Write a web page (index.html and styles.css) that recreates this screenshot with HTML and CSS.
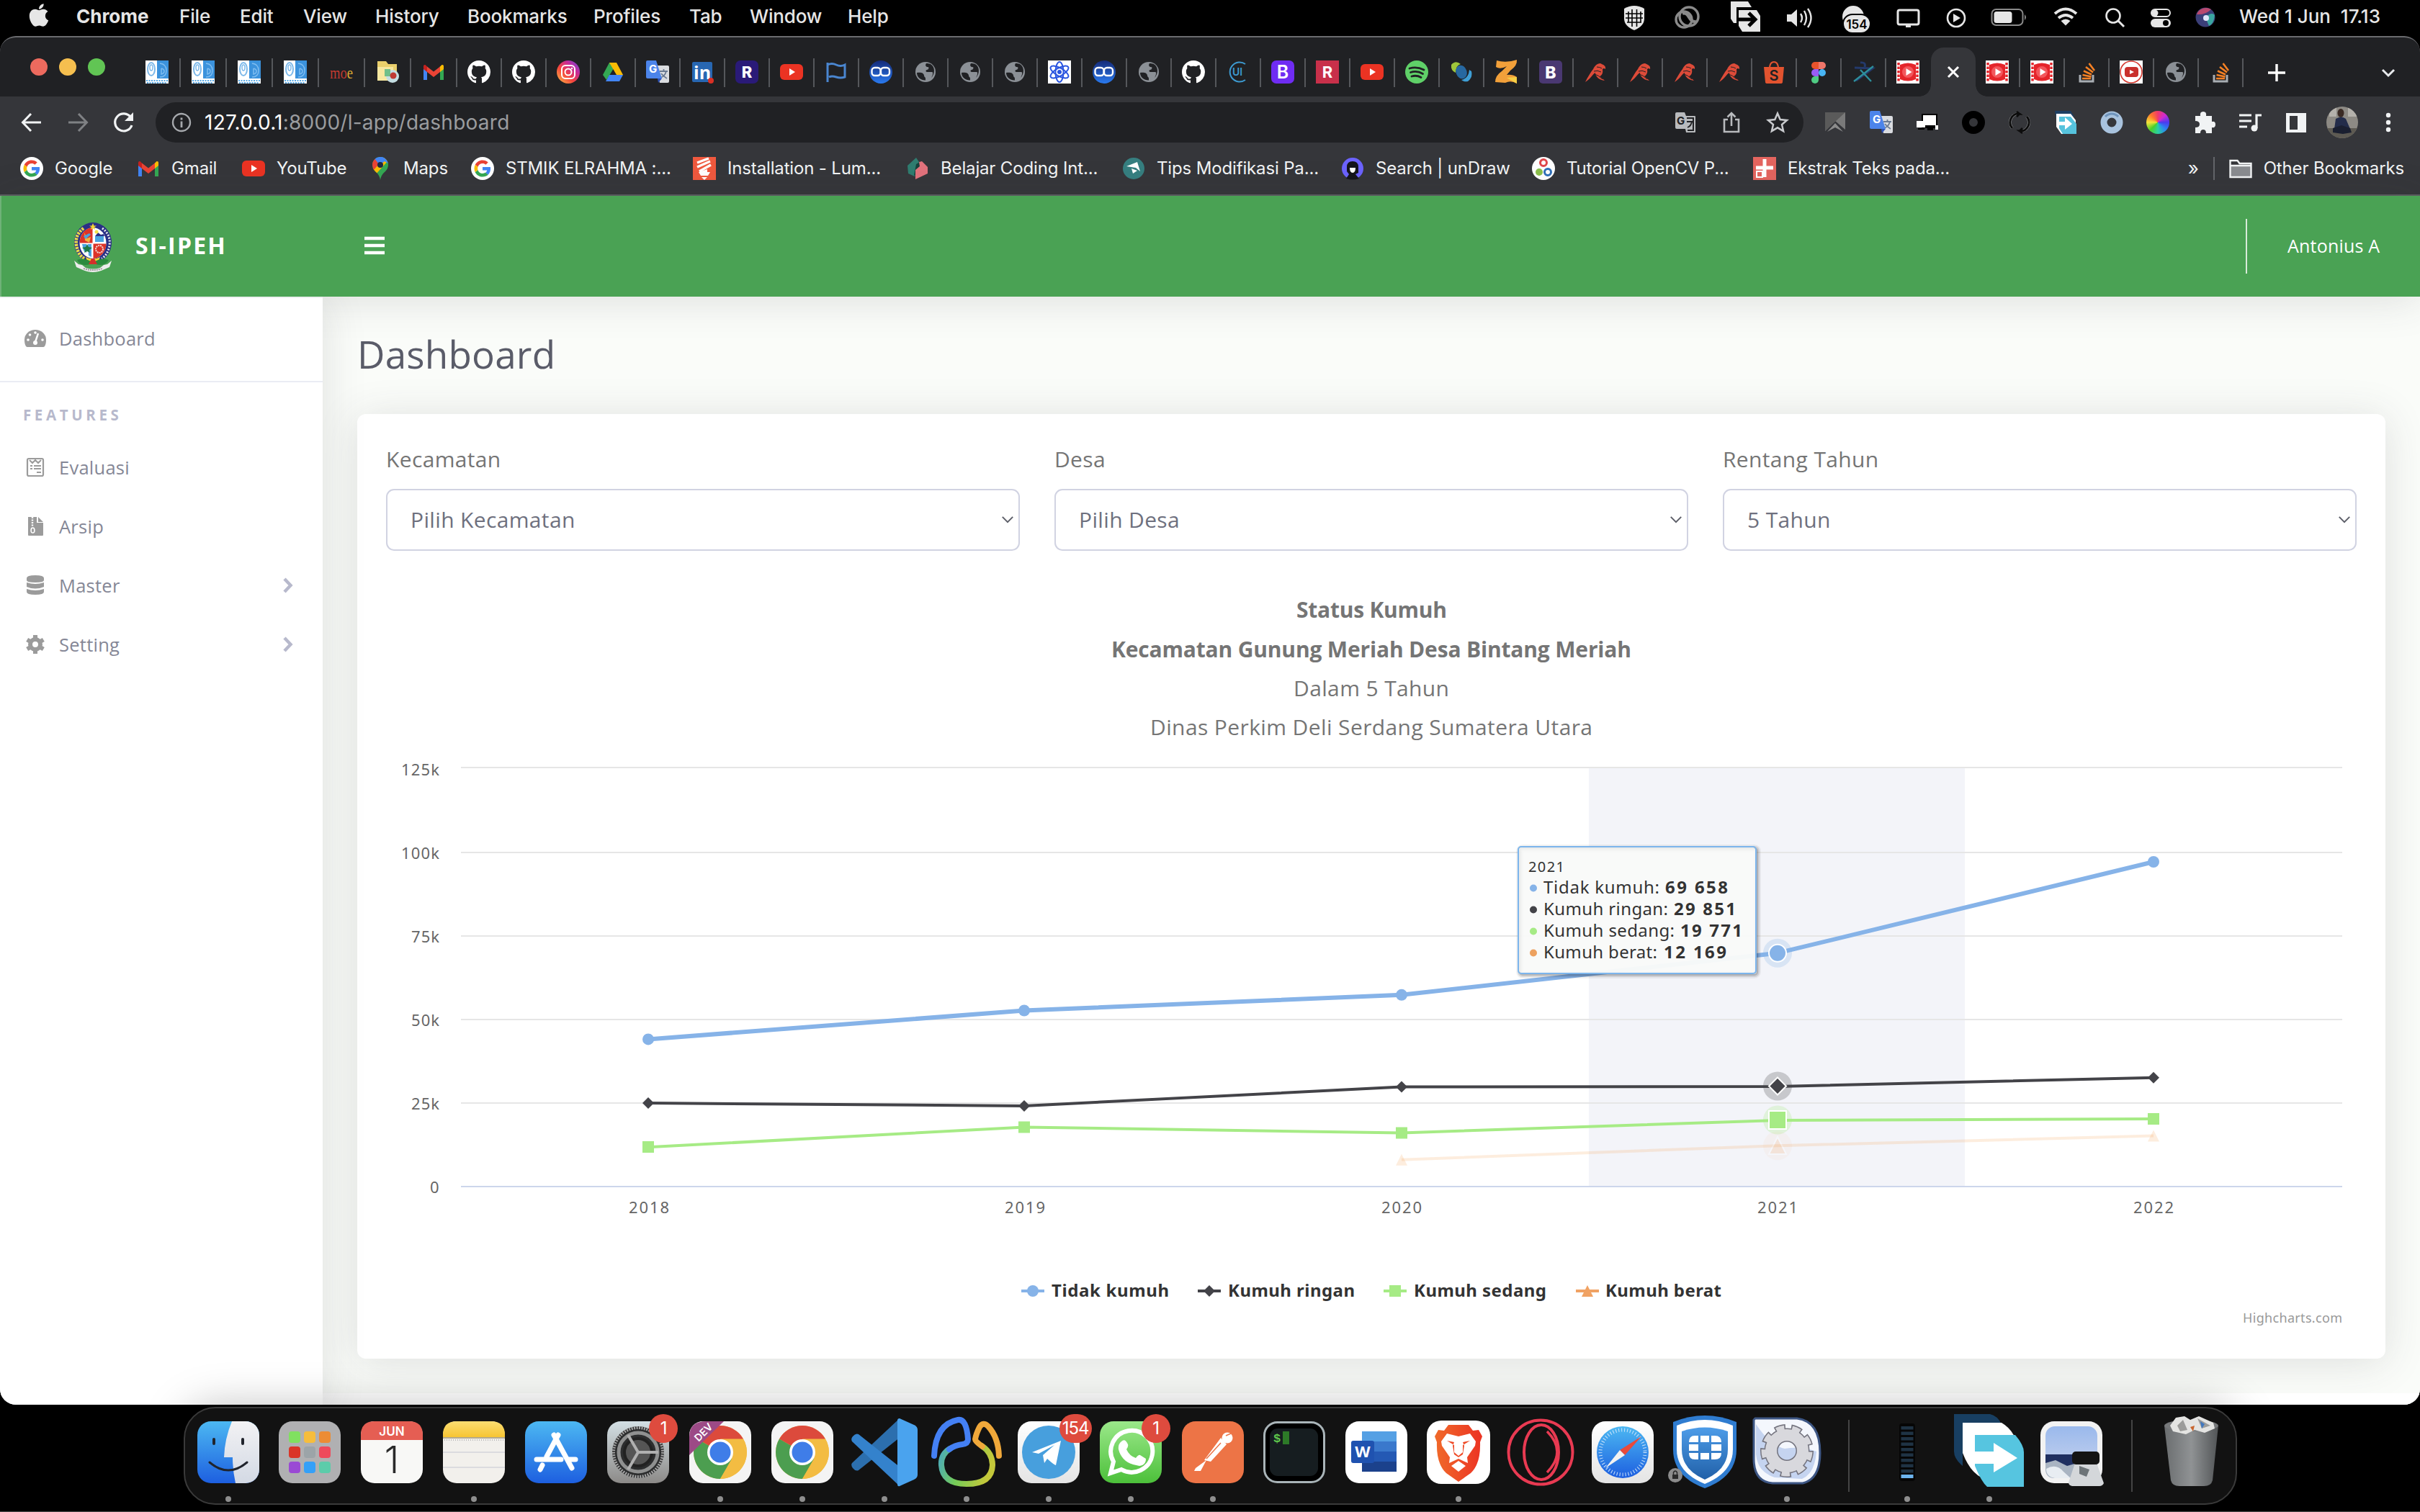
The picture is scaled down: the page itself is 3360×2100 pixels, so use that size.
FILE: index.html
```html
<!DOCTYPE html>
<html lang="id">
<head>
<meta charset="utf-8">
<title>Dashboard</title>
<link rel="stylesheet" href="styles.css">
</head>
<body>
<svg class="defs" width="0" height="0">
  <defs>
    <linearGradient id="gInsta" x1="0" y1="1" x2="1" y2="0"><stop offset="0" stop-color="#fdc648"/><stop offset=".4" stop-color="#f5443c"/><stop offset=".7" stop-color="#c52b9b"/><stop offset="1" stop-color="#5f4de0"/></linearGradient>
    <linearGradient id="gBlue" x1="0" y1="0" x2="0" y2="1"><stop offset="0" stop-color="#4cb8f2"/><stop offset="1" stop-color="#1d5fe0"/></linearGradient>
    <linearGradient id="gBB" x1="0" y1="0" x2="0" y2="1"><stop offset="0" stop-color="#152a78"/><stop offset="1" stop-color="#2a7af0"/></linearGradient>
    <linearGradient id="gWhite" x1="0" y1="0" x2="0" y2="1"><stop offset="0" stop-color="#fff"/><stop offset="1" stop-color="#e4e4e4"/></linearGradient>
    <linearGradient id="gGreen" x1="0" y1="0" x2="0" y2="1"><stop offset="0" stop-color="#9be88a"/><stop offset="1" stop-color="#4cc03a"/></linearGradient>
    <linearGradient id="gYellow" x1="0" y1="0" x2="0" y2="1"><stop offset="0" stop-color="#fbdd72"/><stop offset="1" stop-color="#f7c532"/></linearGradient>
    <linearGradient id="gGrey" x1="0" y1="0" x2="0" y2="1"><stop offset="0" stop-color="#d3dfe4"/><stop offset="1" stop-color="#8c8a88"/></linearGradient>
    <linearGradient id="gCan" x1="0" y1="0" x2="1" y2="0"><stop offset="0" stop-color="#6f7274"/><stop offset=".5" stop-color="#96999b"/><stop offset="1" stop-color="#55585a"/></linearGradient>
    <linearGradient id="gShield" x1="0" y1="0" x2="0" y2="1"><stop offset="0" stop-color="#4d9ce8"/><stop offset="1" stop-color="#2160a8"/></linearGradient>
    <linearGradient id="gBrave" x1="0" y1="0" x2="1" y2="0"><stop offset="0" stop-color="#f06a2a"/><stop offset="1" stop-color="#ec3323"/></linearGradient>
    <linearGradient id="gFace" x1="0" y1="0" x2="0" y2="1"><stop offset="0" stop-color="#f2f2f4"/><stop offset="1" stop-color="#d3d9e4"/></linearGradient>
    <linearGradient id="gNavi" gradientUnits="userSpaceOnUse" x1="22" y1="40" x2="94" y2="60"><stop offset="0" stop-color="#48a8c0"/><stop offset=".45" stop-color="#74cc58"/><stop offset="1" stop-color="#c4c83a"/></linearGradient>
    <linearGradient id="gSky" x1="0" y1="0" x2="0" y2="1"><stop offset="0" stop-color="#9ab9ec"/><stop offset="1" stop-color="#cdd6ee"/></linearGradient>
  </defs>
  <symbol id="github" viewBox="0 0 16 16"><path fill="#fff" d="M8 0C3.58 0 0 3.58 0 8c0 3.54 2.29 6.53 5.47 7.59.4.07.55-.17.55-.38 0-.19-.01-.82-.01-1.49-2.01.37-2.53-.49-2.69-.94-.09-.23-.48-.94-.82-1.13-.28-.15-.68-.52-.01-.53.63-.01 1.08.58 1.23.82.72 1.21 1.87.87 2.33.66.07-.52.28-.87.51-1.07-1.78-.2-3.64-.89-3.64-3.95 0-.87.31-1.59.82-2.15-.08-.2-.36-1.02.08-2.12 0 0 .67-.21 2.2.82.64-.18 1.32-.27 2-.27.68 0 1.36.09 2 .27 1.53-1.04 2.2-.82 2.2-.82.44 1.1.16 1.92.08 2.12.51.56.82 1.27.82 2.15 0 3.07-1.87 3.75-3.65 3.95.29.25.54.73.54 1.48 0 1.07-.01 1.93-.01 2.2 0 .21.15.46.55.38A8.013 8.013 0 0016 8c0-4.42-3.58-8-8-8z"/></symbol>
  <symbol id="google" viewBox="0 0 32 32"><circle cx="16" cy="16" r="16" fill="#fff"/><g transform="translate(4.5 4.5) scale(.48)"><path fill="#ea4335" d="M24 9.5c3.54 0 6.71 1.22 9.21 3.6l6.85-6.85C35.9 2.38 30.47 0 24 0 14.62 0 6.51 5.38 2.56 13.22l7.98 6.19C12.43 13.72 17.74 9.5 24 9.5z"/><path fill="#4285f4" d="M46.98 24.55c0-1.57-.15-3.09-.38-4.55H24v9.02h12.94c-.58 2.96-2.26 5.48-4.78 7.18l7.73 6c4.51-4.18 7.09-10.36 7.09-17.65z"/><path fill="#fbbc05" d="M10.53 28.59c-.48-1.45-.76-2.99-.76-4.59s.27-3.14.76-4.59l-7.98-6.19C.92 16.46 0 20.12 0 24c0 3.88.92 7.54 2.56 10.78l7.97-6.19z"/><path fill="#34a853" d="M24 48c6.48 0 11.93-2.13 15.89-5.81l-7.73-6c-2.15 1.45-4.92 2.3-8.16 2.3-6.26 0-11.57-4.22-13.47-9.91l-7.98 6.19C6.51 42.62 14.62 48 24 48z"/></g></symbol>
  <symbol id="gmail" viewBox="0 0 32 32"><path fill="#4285f4" d="M2 27h5V14L2 9z"/><path fill="#34a853" d="M25 27h5V9l-5 5z"/><path fill="#c5221f" d="M2 8v4l5 4V8.500L5 6.500C3.500 5.500 2 6.500 2 8z"/><path fill="#fbbc04" d="M30 8v4l-5 4V8.500L27 6.500c1.500-1 3 0 3 1.500z"/><path fill="#ea4335" d="M7 8.500l9 7 9-7V16l-9 7-9-7z"/></symbol>
  <symbol id="youtube" viewBox="0 0 32 32"><rect y="5" width="32" height="22" rx="6" fill="#eb3323"/><path fill="#fff" d="M13 11l8 5-8 5z"/></symbol>
  <symbol id="globe" viewBox="0 0 32 32"><circle cx="16" cy="16" r="14" fill="#8b9096"/><path fill="#202124" d="M4 17c5-1 10 0 10 4 0 2 2 2 2 4v2.500C9 27.500 4 23 4 17zM17 4c-2 3 0 5 2 5 3 0 1 4-1 4s-2 3 0 3h7c2 0 1 5-1 8 5-5 6-15-1-19-2-1-4-1-6-1z"/></symbol>
  <symbol id="share1" viewBox="0 0 32 32"><rect width="32" height="32" fill="#fff"/><path fill="#3b92dc" d="M16 0h16v25H16z"/><ellipse cx="8" cy="12" rx="5" ry="9" fill="none" stroke="#7db9ea" stroke-width="2"/><ellipse cx="8" cy="10" rx="2" ry="4" fill="none" stroke="#7db9ea" stroke-width="1.500"/><path d="M20 4q9 1 9 10t-9 9M22 11v8q4-1 4-4t-4-4" fill="none" stroke="#7fbdf0" stroke-width="1.500"/><path d="M1 28h30M2 31h28" stroke="#58a8e4" stroke-width="2" stroke-dasharray="2 1.500"/></symbol>
  <symbol id="bb" viewBox="0 0 32 32"><circle cx="16" cy="16" r="16" fill="url(#gBB)"/><rect x="3.500" y="10" width="12" height="11" rx="4" fill="none" stroke="#fff" stroke-width="2.400"/><rect x="16" y="10" width="12" height="11" rx="4" fill="none" stroke="#fff" stroke-width="2.400"/></symbol>
  <symbol id="ci" viewBox="0 0 32 32"><path fill="#dd4b39" d="M23 4c4 2 8 3 7 8-2-2-4-1-4 1 1 4-1 8-4 9 2 2 5 4 7 6-7-1-13-5-13-11-3 1-6 8-14 13 3-6 7-13 11-18 2-4 5-8 10-8z"/><path d="M14 15q5-2 10 1M15 19q5 1 11 7M18 9q4 0 7 2" fill="none" stroke="#202124" stroke-width="1"/></symbol>
  <symbol id="vid" viewBox="0 0 32 32"><rect width="32" height="32" fill="#fff"/><path fill="#e5252b" d="M5 6q11-5 22 0v20q-11 5-22 0z"/><path d="M3 3v26M29 3v26" stroke="#e5252b" stroke-width="3.500" stroke-dasharray="3.500 2"/><circle cx="16" cy="16" r="8" fill="#f3575c"/><path fill="#fff" d="M13.500 11l8 5-8 5z"/></symbol>
  <symbol id="so" viewBox="0 0 32 32"><path d="M7 20v9h18v-9" fill="none" stroke="#a8adb2" stroke-width="3"/><path d="M10 25h12M10.500 20l12 2.400M12 14.500l11 5M15 9l10 7.500M19.500 4l7.500 10" stroke="#f48024" stroke-width="2.600"/></symbol>
  <symbol id="translate" viewBox="0 0 32 32"><path fill="#dadce0" d="M13 7h17q2 0 2 2v20q0 2-2 2H19z"/><path d="M19 15h11M24.500 12v3M28 15q-2 7-8 9M21 18q3 4 8 7" stroke="#6a7a92" stroke-width="1.800" fill="none"/><path fill="#4c84ea" d="M2 0h12l8 25H2q-2 0-2-2V2q0-2 2-2z"/><path fill="#2b50b8" d="M16 25h6l-5 6z"/><text x="4" y="17" font-size="15" font-weight="700" fill="#fff" font-family="Inter">G</text></symbol>
  <symbol id="chromeball" viewBox="0 0 74 74"><circle cx="37" cy="37" r="37" fill="#f3bc42"/><path fill="#dc4a3c" d="M37 37L5 18.500A37 37 0 0169 18.500z"/><path fill="#4c9e50" d="M37 37L5 18.500A37 37 0 0037 74L53 46z"/><path fill="#f3bc42" d="M37 18.500h32A37 37 0 0137 74l17-28z"/><circle cx="37" cy="37" r="18" fill="#fff"/><circle cx="37" cy="37" r="14.500" fill="#3f7de8"/></symbol>
</svg>

<header class="menubar">
  <nav class="menus">
    <svg class="apple" viewBox="0 0 384 512"><path fill="#e6e6e6" d="M318.7 268.7c-.2-36.7 16.400-64.400 50-84.800-18.800-26.900-47.200-41.700-84.700-44.600-35.500-2.800-74.300 20.700-88.500 20.700-15 0-49.400-19.700-76.400-19.700C63.300 141.200 4 184.800 4 273.500q0 39.300 14.400 81.200c12.800 36.700 59 126.700 107.200 125.200 25.200-.6 43-17.900 75.800-17.900 31.800 0 48.300 17.900 76.400 17.900 48.600-.7 90.400-82.500 102.600-119.300-65.200-30.700-61.700-90-61.700-91.900zm-56.600-164.200c27.300-32.400 24.800-61.900 24-72.500-24.100 1.400-52 16.400-67.900 34.900-17.500 19.800-27.800 44.300-25.600 71.900 26.100 2 49.900-11.400 69.500-34.300z"/></svg>
    <b>Chrome</b><span>File</span><span>Edit</span><span>View</span><span>History</span><span>Bookmarks</span><span>Profiles</span><span>Tab</span><span>Window</span><span>Help</span>
  </nav>
  <div class="status">
    <svg viewBox="0 0 50 50"><path fill="#e6e6e6" d="M11 12q14-8 28 0v14q0 10-14 16Q11 36 11 26z"/><path d="M17 16v15M22 13v24M28.500 13v24M34 16v15M13 19h24M13 25h24M15 31h20" stroke="#000" stroke-width="1.600"/></svg>
    <svg viewBox="0 0 50 50"><circle cx="26" cy="23" r="13" fill="none" stroke="#8a8a8a" stroke-width="3.400"/><circle cx="19" cy="27" r="11" fill="none" stroke="#8a8a8a" stroke-width="3.400"/><path d="M17 19q5-2 9 5t10 6" fill="none" stroke="#8a8a8a" stroke-width="4"/></svg>
    <svg viewBox="0 0 50 50"><path fill="#e6e6e6" d="M4 2h24l5 8H12v22h-4l-4-6z"/><path fill="#e6e6e6" d="M15 14h25l5 8v22H20l-5-8z"/><path stroke="#000" stroke-width="5" fill="none" d="M15 27h21M29 18l9 9-9 9"/></svg>
    <svg viewBox="0 0 50 50"><path fill="#e6e6e6" d="M8 20h6l8-7v24l-8-7H8z"/><path d="M27 19q4 6 0 12M32 15q6 10 0 20M37 12q9 13 0 26" fill="none" stroke="#e6e6e6" stroke-width="2.400"/></svg>
    <svg viewBox="0 0 50 50"><circle cx="20" cy="23" r="15" fill="#e6e6e6"/><rect x="6" y="20" width="38" height="26" rx="13" fill="#e6e6e6" stroke="#000" stroke-width="2"/><text x="25" y="39.500" font-size="17" font-weight="600" text-anchor="middle" font-family="Inter">154</text></svg>
    <svg viewBox="0 0 50 50"><rect x="11" y="14" width="29" height="20" rx="2.500" fill="none" stroke="#e6e6e6" stroke-width="3"/><path d="M22 34h7v4h-7z" fill="#e6e6e6"/></svg>
    <svg viewBox="0 0 50 50"><circle cx="25" cy="25" r="12" fill="none" stroke="#e6e6e6" stroke-width="2.600"/><path fill="#e6e6e6" d="M21 19l10 6-10 6z"/></svg>
    <svg viewBox="0 0 50 50"><rect x="1.500" y="13" width="43" height="22" rx="6" fill="none" stroke="#8a8a8a" stroke-width="2"/><rect x="4.500" y="16" width="25" height="16" rx="3.500" fill="#e6e6e6"/><path d="M47 20q4 4 0 8z" fill="#8a8a8a"/></svg>
    <svg viewBox="0 0 50 50"><path d="M10 19q15-13 30 0M15 25q10-8 20 0" fill="none" stroke="#e6e6e6" stroke-width="4"/><path fill="#e6e6e6" d="M18.500 29q6.500-5 13 0L25 35.500z"/></svg>
    <svg viewBox="0 0 50 50"><circle cx="23" cy="22" r="9.500" fill="none" stroke="#e6e6e6" stroke-width="2.600"/><path d="M30 29l8 8" stroke="#e6e6e6" stroke-width="3"/></svg>
    <svg viewBox="0 0 50 50"><rect x="12" y="13" width="26" height="10" rx="5" fill="none" stroke="#e6e6e6" stroke-width="2"/><circle cx="17" cy="18" r="4.500" fill="#e6e6e6"/><rect x="11" y="26" width="28" height="12" rx="6" fill="#e6e6e6"/><circle cx="32" cy="32" r="4" fill="#000"/></svg>
    <svg viewBox="0 0 50 50"><circle cx="25" cy="24" r="13.500" fill="#3b3f78"/><path fill="#b8486e" d="M13 20a13.500 13.500 0 0120-7q-8 8-20 7z"/><path fill="#3aa6a0" d="M25 24q9-8 13-3-1 12-8 15z"/><circle cx="26" cy="25" r="4" fill="#dfe6fa"/></svg>
    <time>Wed 1 Jun&nbsp; 17.13</time>
  </div>
</header>

<main class="window">
  <div class="tabstrip">
    <div class="lights"><i></i><i></i><i></i></div>
    <div class="tabs">
      <div class="tab wide"><svg><use href="#share1"/></svg></div>
      <div class="tab wide"><svg><use href="#share1"/></svg></div>
      <div class="tab wide"><svg><use href="#share1"/></svg></div>
      <div class="tab wide"><svg><use href="#share1"/></svg></div>
      <div class="tab wide"><svg viewBox="0 0 32 32"><text x="0" y="25" font-size="24" font-family="Liberation Serif" fill="#c23a30" textLength="32" lengthAdjust="spacingAndGlyphs">mo<tspan fill="#d8a832">e</tspan></text></svg></div>
      <div class="tab wide"><svg viewBox="0 0 32 32"><path fill="#e9cf6c" d="M2 1h12l3 4h12v23H2z"/><path fill="#f6e7a0" d="M2 9h22v19H2z"/><circle cx="23" cy="22" r="9" fill="#c4dde2"/><path fill="#6fbf8a" d="M12 12h8v10h-8z"/><circle cx="24" cy="21" r="4.500" fill="#c03a34"/></svg></div>
      <div class="tab wide"><svg><use href="#gmail"/></svg></div>
      <div class="tab"><svg><use href="#github"/></svg></div>
      <div class="tab"><svg><use href="#github"/></svg></div>
      <div class="tab"><svg viewBox="0 0 32 32"><circle cx="16" cy="16" r="16" fill="url(#gInsta)"/><rect x="7" y="7" width="18" height="18" rx="5" fill="none" stroke="#fff" stroke-width="2"/><circle cx="16" cy="16" r="4.500" fill="none" stroke="#fff" stroke-width="2"/><circle cx="21" cy="11" r="1.200" fill="#fff"/></svg></div>
      <div class="tab"><svg viewBox="0 0 32 32"><path fill="#34a853" d="M11 3h5l3 5L7 27l-5-7z"/><path fill="#fbbc04" d="M11 3h10l9 17h-9z"/><path fill="#4285f4" d="M11 20h19l-5 9H6z"/></svg></div>
      <div class="tab"><svg><use href="#translate"/></svg></div>
      <div class="tab"><svg viewBox="0 0 32 32"><rect x="2" y="2" width="28" height="28" rx="2" fill="#2867b2"/><text x="4" y="26" font-size="25" font-weight="700" fill="#fff" font-family="Open Sans">in</text><circle cx="28" cy="28" r="4" fill="#d93025"/></svg></div>
      <div class="tab"><svg viewBox="0 0 32 32"><rect width="32" height="32" rx="7" fill="#2a1a78"/><text x="16" y="24" font-size="22" font-weight="800" text-anchor="middle" fill="#fff" font-family="Inter">R</text></svg></div>
      <div class="tab"><svg><use href="#youtube"/></svg></div>
      <div class="tab"><svg viewBox="0 0 32 32"><path fill="none" stroke="#4a86d0" stroke-width="3" d="M4 3v27M4 6q6-3 12 0t12 0v17q-6 2-12 0t-10 0"/></svg></div>
      <div class="tab"><svg><use href="#bb"/></svg></div>
      <div class="tab"><svg><use href="#globe"/></svg></div>
      <div class="tab"><svg><use href="#globe"/></svg></div>
      <div class="tab"><svg><use href="#globe"/></svg></div>
      <div class="tab"><svg viewBox="0 0 32 32"><rect width="32" height="32" fill="#fff"/><g fill="none" stroke="#2a55e0" stroke-width="2"><ellipse cx="16" cy="16" rx="14" ry="5.500" transform="rotate(30 16 16)"/><ellipse cx="16" cy="16" rx="14" ry="5.500" transform="rotate(90 16 16)"/><ellipse cx="16" cy="16" rx="14" ry="5.500" transform="rotate(150 16 16)"/></g><circle cx="16" cy="16" r="3" fill="#2a55e0"/></svg></div>
      <div class="tab"><svg><use href="#bb"/></svg></div>
      <div class="tab"><svg><use href="#globe"/></svg></div>
      <div class="tab"><svg><use href="#github"/></svg></div>
      <div class="tab"><svg viewBox="0 0 32 32"><path d="M26 5a13.500 13.500 0 100 22" fill="none" stroke="#3d9ad0" stroke-width="2"/><text x="8" y="21" font-size="14" font-weight="600" fill="#3d9ad0" font-family="Inter">UI</text></svg></div>
      <div class="tab"><svg viewBox="0 0 32 32"><rect width="32" height="32" rx="7" fill="#6f2cf3"/><text x="16" y="25" font-size="25" font-weight="600" text-anchor="middle" fill="#fff" font-family="Inter">B</text></svg></div>
      <div class="tab"><svg viewBox="0 0 32 32"><rect width="32" height="32" fill="#c8304a"/><text x="16" y="24" font-size="22" font-weight="700" text-anchor="middle" fill="#fff" font-family="Inter">R</text></svg></div>
      <div class="tab"><svg><use href="#youtube"/></svg></div>
      <div class="tab"><svg viewBox="0 0 32 32"><circle cx="16" cy="16" r="16" fill="#5fd068"/><path d="M6 11q10-3 20 2M7.500 16.500q9-3 17 2M9 22q7-2 13 1.500" fill="none" stroke="#202124" stroke-width="2.800" stroke-linecap="round"/></svg></div>
      <div class="tab"><svg viewBox="0 0 32 32"><path fill="#9fc63b" d="M2 6q6-7 13-1-6 1-7 12-7-3-6-11z"/><ellipse cx="16" cy="16" rx="7.500" ry="9.500" transform="rotate(-20 16 16)" fill="#2768a0"/><path fill="#3f9fd6" d="M30 15q2 9-5 14-5 1-9-2 10-2 11-14z"/></svg></div>
      <div class="tab"><svg viewBox="0 0 32 32"><path fill="#f2a03a" d="M3 0q13 4 28-1 1 8-9 15l-5 6q8-1 14 3v9q-8-5-16-1L1 30q0-9 9-15l7-7Q8 13 2 9z"/><path fill="#f6cf45" d="M17 24l14-1v9z"/></svg></div>
      <div class="tab"><svg viewBox="0 0 32 32"><rect width="32" height="32" rx="5" fill="#4a3872"/><text x="16" y="24.500" font-size="23" font-weight="800" text-anchor="middle" fill="#fff" font-family="Inter">B</text></svg></div>
      <div class="tab"><svg><use href="#ci"/></svg></div>
      <div class="tab"><svg><use href="#ci"/></svg></div>
      <div class="tab"><svg><use href="#ci"/></svg></div>
      <div class="tab"><svg><use href="#ci"/></svg></div>
      <div class="tab"><svg viewBox="0 0 32 32"><path fill="#e2532f" d="M2 9h28l-2 21q0 2-3 2H7q-3 0-3-2z"/><path d="M10 9q1-7 6-7t6 7" fill="none" stroke="#e2532f" stroke-width="2.200"/><text x="16" y="28" font-size="20" font-weight="600" text-anchor="middle" fill="#202124" font-family="Inter">S</text></svg></div>
      <div class="tab"><svg viewBox="0 0 32 32"><path fill="#e8532c" d="M16 2h-5a5 5 0 000 10h5z"/><path fill="#f0766a" d="M16 2h5a5 5 0 010 10h-5z"/><path fill="#9a5cf5" d="M16 12h-5a5 5 0 000 10h5z"/><circle cx="21" cy="17" r="5" fill="#48b5f5"/><path fill="#4fcb83" d="M16 22h-5a5 5 0 105 5z"/></svg></div>
      <div class="tab"><svg viewBox="0 0 32 32"><path d="M4 10l25 1L6 28" fill="none" stroke="#243a6c" stroke-width="3"/><path d="M3 29L30 8M12 13l15 16" fill="none" stroke="#2d8f9c" stroke-width="2.400"/><path d="M12 3q8-1 6 6" fill="none" stroke="#243a6c" stroke-width="3"/></svg></div>
      <div class="tab plain"><svg><use href="#vid"/></svg></div>
      <div class="tab active"><svg viewBox="0 0 32 32"><path d="M9 9l14 14M23 9L9 23" stroke="#fff" stroke-width="3"/></svg></div>
      <div class="tab"><svg><use href="#vid"/></svg></div>
      <div class="tab"><svg><use href="#vid"/></svg></div>
      <div class="tab"><svg><use href="#so"/></svg></div>
      <div class="tab"><svg viewBox="0 0 32 32"><rect width="32" height="32" fill="#fff"/><circle cx="16" cy="16" r="15" fill="none" stroke="#d43a30" stroke-width="1.600"/><rect x="7" y="9" width="19" height="14" rx="4" fill="#c9302c"/><path fill="#fff" d="M14 13l6 3-6 3z"/></svg></div>
      <div class="tab"><svg><use href="#globe"/></svg></div>
      <div class="tab"><svg><use href="#so"/></svg></div>
    </div>
    <svg class="plus" viewBox="0 0 32 32"><path d="M16 4v24M4 16h24" stroke="#fff" stroke-width="3.400"/></svg>
    <svg class="tabmenu" viewBox="0 0 32 32"><path d="M8 12l8 8 8-8" fill="none" stroke="#e8eaed" stroke-width="3"/></svg>
  </div>

  <div class="toolbar">
    <div class="navs">
      <svg viewBox="0 0 32 32"><path d="M29 16H4M15 4L3.500 16 15 28" fill="none" stroke="#f1f3f4" stroke-width="3"/></svg>
      <svg viewBox="0 0 32 32"><path d="M3 16h25M17 4l11.500 12L17 28" fill="none" stroke="#7f8184" stroke-width="3"/></svg>
      <svg viewBox="0 0 32 32"><path d="M27 20a12 12 0 11-1.500-11" fill="none" stroke="#f1f3f4" stroke-width="3.200"/><path fill="#f1f3f4" d="M29 2v12H17z"/></svg>
    </div>
    <div class="urlbar">
      <svg viewBox="0 0 28 28"><circle cx="14" cy="14" r="12" fill="none" stroke="#a6a9ad" stroke-width="2.400"/><path d="M14 12.500V21M14 7.500v3" stroke="#a6a9ad" stroke-width="2.800"/></svg>
      <p><b>127.0.0.1</b>:8000/l-app/dashboard</p>
      <div class="urlicons">
        <svg viewBox="0 0 32 32"><path fill="#b8babd" d="M4 2h11l2 5h12q1 0 1 1v21q0 1-1 1H17l-1-5H4q-2 0-2-2V4q0-2 2-2z"/><path d="M18 10h9v17h-8" fill="none" stroke="#202124" stroke-width="2"/><path d="M18 15h9M25 15q-1 6-6 8" stroke="#202124" stroke-width="1.800" fill="none"/><text x="4" y="19" font-size="15" font-weight="700" font-family="Inter" fill="#202124">G</text></svg>
        <svg viewBox="0 0 32 32"><path d="M11 12H6v17h20V12h-5M16 21V3M10.500 8.500L16 3l5.500 5.500" fill="none" stroke="#b8babd" stroke-width="2.600"/></svg>
        <svg viewBox="0 0 32 32"><path d="M16 3.500l3.700 8.500 9.300.900-7 6.100 2.100 9.100L16 23.300l-8.100 4.800L10 19l-7-6.100 9.300-.9z" fill="none" stroke="#c8cacd" stroke-width="2.500"/></svg>
      </div>
    </div>
    <div class="exts">
      <svg viewBox="0 0 32 32"><path fill="#7a7a7a" d="M2 2h28v24L16 14 2 28z"/><path fill="#5a5a5a" d="M2 2h28L2 28z"/><path fill="#8c8c8c" d="M5 29l11-12 11 12-11-6z"/></svg>
      <svg><use href="#translate"/></svg>
      <svg viewBox="0 0 32 32"><path fill="#000" d="M8 4h22v20H8z"/><rect x="10" y="6" width="18" height="14" fill="#fff"/><rect x="1" y="14" width="12" height="9" fill="#fff"/><path fill="#000" d="M3 24h9v2H3zM16 23h8v4h-8z"/><path fill="#fff" d="M27 20h4v6h-4z"/></svg>
      <svg viewBox="0 0 32 32"><circle cx="16" cy="16" r="11" fill="none" stroke="#000" stroke-width="10"/></svg>
      <svg viewBox="0 0 32 32"><path d="M6 24A12 12 0 0116 4M26 8A12 12 0 0116 28" fill="none" stroke="#8a8c8f" stroke-width="4"/><path d="M6 24A12 12 0 0116 4l-4-3M16 4l-4 4M26 8A12 12 0 0116 28l4 3M16 28l4-4" fill="none" stroke="#0c0c0c" stroke-width="2.800"/></svg>
      <svg viewBox="0 0 32 32"><path fill="#1d3f63" d="M1 0h22l5 8H6v18z"/><path fill="#fff" d="M3 4h20l7 9v19H10L3 22z"/><path fill="#56c3dd" d="M7 8h16l8 10v14H12L7 24z"/><path fill="#fff" d="M5 15h10v-6l10 9-10 8v-6H5z"/></svg>
      <svg viewBox="0 0 32 32"><circle cx="16" cy="16" r="11" fill="none" stroke="#a9c3de" stroke-width="9"/><path d="M7 8a12 12 0 0118 0" fill="none" stroke="#6f94bc" stroke-width="3"/></svg>
      <div class="wheel"></div>
      <svg viewBox="0 0 32 32"><path fill="#f1f3f4" d="M4 7h7q-1-6 4-6t4 6h8v8q5-1 5 4t-5 4v8h-8q0-5-4-5t-4 5H4v-8q6 0 6-4.500T4 14z"/></svg>
      <svg viewBox="0 0 32 32"><path d="M1 6h17M1 14h17M1 22h11" stroke="#f1f3f4" stroke-width="3.200"/><circle cx="22" cy="24" r="4.500" fill="#f1f3f4"/><path d="M25 24V6h7" fill="none" stroke="#f1f3f4" stroke-width="3.200"/></svg>
      <svg viewBox="0 0 32 32"><path fill="#f1f3f4" fill-rule="evenodd" d="M2 3h28v27H2zM7 7v19h11V7z"/></svg>
      <svg class="avatar" viewBox="0 0 44 44"><clipPath id="av"><circle cx="22" cy="22" r="22"/></clipPath><g clip-path="url(#av)"><path fill="#8d8a84" d="M0 0h44v44H0z"/><path fill="#5d5a52" d="M0 30h44v14H0z"/><path fill="#b4b1ab" d="M4 0h10v14H4zM30 2h12v12H30z"/><ellipse cx="20" cy="9" rx="4.500" ry="6" fill="#3a2a24"/><path fill="#232c4a" d="M13 17q8-5 14 0l6 14-6 2-4-6-6 6-6-2z"/><path fill="#1a1f30" d="M9 30l12-4 12 4 2 6-12 2-14-2z"/></g></svg>
      <svg viewBox="0 0 32 32"><circle cx="16" cy="6" r="3.200" fill="#f1f3f4"/><circle cx="16" cy="16" r="3.200" fill="#f1f3f4"/><circle cx="16" cy="26" r="3.200" fill="#f1f3f4"/></svg>
    </div>
  </div>

  <div class="bookmarks">
    <div class="marks">
      <a><svg><use href="#google"/></svg><span>Google</span></a>
      <a><svg><use href="#gmail"/></svg><span>Gmail</span></a>
      <a><svg><use href="#youtube"/></svg><span>YouTube</span></a>
      <a><svg viewBox="0 0 32 32"><clipPath id="pin"><path d="M16 32q-1-7-7-12-4-4-4-9a11 11 0 0122 0q0 5-4 9-6 5-7 12z"/></clipPath><g clip-path="url(#pin)"><path fill="#34a853" d="M0 0h32v32H0z"/><path fill="#fbbc04" d="M0 20L22 0l6 4L8 26z"/><path fill="#4285f4" d="M14 0h18v12L22 6l-8 6z"/><path fill="#4285f4" d="M8 0h14l-9 12-6-6z"/><path fill="#ea4335" d="M0 2l8 0 6 8-8 9z"/></g><circle cx="16" cy="11" r="4" fill="#1e2a44"/></svg><span>Maps</span></a>
      <a><svg><use href="#google"/></svg><span>STMIK ELRAHMA :...</span></a>
      <a><svg viewBox="0 0 32 32"><rect width="32" height="32" fill="#f0593e"/><path d="M6 8l16-6M6 14l18-8M9 20l16-9" stroke="#fff" stroke-width="3.400"/><path fill="#fff" d="M8 21l12-4v4h4l-3 5H11zM12 28h8l-4 4z"/></svg><span>Installation - Lum...</span></a>
      <a><svg viewBox="0 0 32 32"><path fill="#2f7d70" d="M2 12L14 1l4 6-6 20-9-4z"/><path fill="#17423c" d="M14 10l7-4-4 16-6 4z"/><path fill="#e2727c" d="M18 7l4-1 8 8v9L13 31V18l6-5z"/></svg><span>Belajar Coding Int...</span></a>
      <a><svg viewBox="0 0 32 32"><circle cx="16" cy="16" r="15" fill="#367f80"/><path fill="#fff" d="M6 13l15-6 4 13-6-5zM13 16l8 3-6 4z"/></svg><span>Tips Modifikasi Pa...</span></a>
      <a><svg viewBox="0 0 32 32"><circle cx="16" cy="16" r="15" fill="#6c63ff"/><path fill="#15151c" d="M8 20V14q0-8 8-8t8 8v8l-4 2 5 6q-9 3-18 0l4-6z"/><path fill="#fff" d="M12 15h8q0 7-4 7t-4-7z"/></svg><span>Search | unDraw</span></a>
      <a><svg viewBox="0 0 32 32"><circle cx="16" cy="16" r="16" fill="#fff"/><circle cx="16" cy="8" r="4.500" fill="none" stroke="#e0474a" stroke-width="3"/><circle cx="10" cy="21" r="5" fill="#8cc04b"/><circle cx="22" cy="21" r="4.500" fill="none" stroke="#2f6fb8" stroke-width="3"/></svg><span>Tutorial OpenCV P...</span></a>
      <a><svg viewBox="0 0 32 32"><rect width="32" height="32" fill="#e4655f"/><path d="M16 3v25M4 15h24" stroke="#fff" stroke-width="5"/><path fill="none" stroke="#fff" stroke-width="2" d="M5 20h8v8H5z"/></svg><span>Ekstrak Teks pada...</span></a>
    </div>
    <span class="more">»</span>
    <a class="other"><svg viewBox="0 0 32 32"><path fill="#8a8c90" d="M2 12h28v17H2z"/><path d="M1.500 5h10l3 4h16v19h-29zM2 12h28" fill="none" stroke="#f1f3f4" stroke-width="2.400"/></svg><span>Other Bookmarks</span></a>
  </div>

  <div class="page">
    <div class="navbar">
      <div class="brand">
        <svg viewBox="0 0 54 70"><ellipse cx="27" cy="29" rx="26" ry="28" fill="#2a2f86"/><path d="M14 9Q2 18 4 32q2 14 11 19" fill="none" stroke="#e8d84a" stroke-width="4.500" stroke-dasharray="3 1.200"/><path d="M40 9q12 9 10 23-2 14-11 19" fill="none" stroke="#e9efe9" stroke-width="3" stroke-dasharray="2 2"/><ellipse cx="27" cy="29.500" rx="18.500" ry="21.500" fill="#fff"/><path fill="#dc3328" d="M26.500 29.500h-18A18.500 21.500 0 0126.500 8zM27.500 30.500h18A18.500 21.500 0 0127.500 51z"/><path fill="#f0b040" d="M15 15l4 8 5-2-2 8-6-3z"/><path fill="#4aa3e0" d="M14 20l8-4 2 2-7 6zM30 20h12v8H30zM12 31h6v12l-4-3zM20 31h5v18l-4-2z"/><path fill="#2a2f86" d="M30 20l4-5 4 3 4-1 1 3z"/><path fill="#1f7a48" d="M12 36l5-1 2-4 2 4 5 1-4 3 1 4-4-2-4 2 1-4z"/><circle cx="36" cy="38" r="5" fill="none" stroke="#f3d6d2" stroke-width="2" stroke-dasharray="2 1"/><circle cx="32" cy="14" r="2.500" fill="#f3e14b"/><path fill="#f3d633" d="M27 2l1.500 3.500h3.500l-3 2 1 3.500-3-2-3 2 1-3.500-3-2h3.500zM17 49q10 5 20 0l-3 8H20z"/><path fill="#2a8a3e" d="M5 53q9-4 19 2l-1 4q-10 3-16-3zM49 53q-9-4-19 2l1 4q10 3 16-3z"/><path fill="#d3302a" d="M25 51h4l4 8h-12z"/><path fill="#ececec" d="M1 54l6 5 5 1 5 4q10 3 20 0l5-4 5-1 6-5-3 9-7 3q-16 8-32 0l-7-3z"/><path d="M14 65q13 4 26 0" fill="none" stroke="#999" stroke-width="2" stroke-dasharray="2 1"/></svg>
        <strong>SI-IPEH</strong>
      </div>
      <svg class="burger" viewBox="0 0 28 26"><path d="M0 3h28M0 13h28M0 23h28" stroke="#fff" stroke-width="4.400"/></svg>
      <div class="user">Antonius A</div>
    </div>
    <div class="body">
      <aside class="sidebar">
        <a class="item first"><svg viewBox="0 0 32 32"><path fill="#9b9b9b" d="M1 18a15 14 0 0130 0q0 6-2 9-1 1-2 1H5q-1 0-2-1-2-3-2-9z"/><g fill="#fff"><circle cx="16" cy="8" r="1.800"/><circle cx="8.500" cy="11" r="1.800"/><circle cx="6" cy="18" r="1.800"/><circle cx="26" cy="18" r="1.800"/><circle cx="16" cy="22" r="3"/></g><path d="M16 21l4-12" stroke="#fff" stroke-width="2.400"/></svg><span>Dashboard</span></a>
        <h6>FEATURES</h6>
        <a class="item"><svg viewBox="0 0 32 32"><rect x="5" y="4" width="22" height="24" rx="2" fill="none" stroke="#9b9b9b" stroke-width="2.200"/><path d="M8 6l4 4 4-4 4 4 4-4M9 14h3M14 14h10M9 18h3M14 18h10M18 23h6" fill="none" stroke="#9b9b9b" stroke-width="2"/></svg><span>Evaluasi</span></a>
        <a class="item"><svg viewBox="0 0 32 32"><path fill="#9b9b9b" d="M6 3h12v8h9v17q0 1-1 1H7q-1 0-1-1zM20 3l7 7h-7z"/><path d="M12 3v14" stroke="#fff" stroke-width="2.400" stroke-dasharray="2 1.500"/><ellipse cx="12.500" cy="21.500" rx="2.400" ry="3.500" fill="none" stroke="#fff" stroke-width="1.600"/></svg><span>Arsip</span></a>
        <a class="item"><svg viewBox="0 0 32 32"><path fill="#9b9b9b" d="M4 6q0-4 12-4t12 4v3q0 3-12 3T4 9zM4 12q12 4 24 0v6q-12 5-24 0zM4 21q12 4 24 0v4q0 4-12 4T4 25z"/></svg><span>Master</span><svg class="chev" viewBox="0 0 20 24"><path d="M5 3l8.500 9L5 21" fill="none" stroke="#b7b9cc" stroke-width="4.500"/></svg></a>
        <a class="item"><svg viewBox="0 0 32 32"><circle cx="16" cy="16" r="7" fill="none" stroke="#9b9b9b" stroke-width="6"/><path d="M16 3v6M16 23v6M4.700 9.500l5.200 3M22.100 19.500l5.200 3M4.700 22.500l5.200-3M22.100 12.500l5.200-3" stroke="#9b9b9b" stroke-width="6"/></svg><span>Setting</span><svg class="chev" viewBox="0 0 20 24"><path d="M5 3l8.500 9L5 21" fill="none" stroke="#b7b9cc" stroke-width="4.500"/></svg></a>
      </aside>
      <section class="content">
        <h1>Dashboard</h1>
        <div class="card">
          <div class="filters">
            <label>Kecamatan<span class="select">Pilih Kecamatan<svg viewBox="0 0 20 12"><path d="M2 2l8 8 8-8" fill="none" stroke="#5c5e68" stroke-width="2.200"/></svg></span></label>
            <label>Desa<span class="select">Pilih Desa<svg viewBox="0 0 20 12"><path d="M2 2l8 8 8-8" fill="none" stroke="#5c5e68" stroke-width="2.200"/></svg></span></label>
            <label>Rentang Tahun<span class="select">5 Tahun<svg viewBox="0 0 20 12"><path d="M2 2l8 8 8-8" fill="none" stroke="#5c5e68" stroke-width="2.200"/></svg></span></label>
          </div>
          <svg class="chart" viewBox="496 806 2815 1081">
            <g class="ctitle">
              <text x="1800" y="857.500" textLength="209" font-weight="700">Status Kumuh</text>
              <text x="1543" y="912.500" textLength="722" font-weight="700">Kecamatan Gunung Meriah Desa Bintang Meriah</text>
              <text x="1796" y="966.500" textLength="216">Dalam 5 Tahun</text>
              <text x="1597" y="1020.500" textLength="614">Dinas Perkim Deli Serdang Sumatera Utara</text>
            </g>
            <rect x="2206" y="1066" width="522" height="582" fill="#f3f4f9"/>
            <path d="M640 1066H3252M640 1184H3252M640 1300H3252M640 1416H3252M640 1532H3252" stroke="#e6e6e6" stroke-width="2"/>
            <path d="M640 1648H3252" stroke="#ccd6eb" stroke-width="2"/>
            <g class="axis">
              <text x="557" y="1077" textLength="53">125k</text><text x="557" y="1193" textLength="53">100k</text><text x="571" y="1309" textLength="39">75k</text><text x="571" y="1425" textLength="39">50k</text><text x="571" y="1541" textLength="39">25k</text><text x="597" y="1657">0</text>
              <text x="873" y="1685" textLength="56">2018</text><text x="1395" y="1685" textLength="56">2019</text><text x="1918" y="1685" textLength="56">2020</text><text x="2440" y="1685" textLength="56">2021</text><text x="2962" y="1685" textLength="56">2022</text>
            </g>
            <g fill="none" stroke-linejoin="round">
              <path d="M1946 1610.800L2468 1591.300 2990 1577.600" stroke="#f7a35c" stroke-width="4" opacity=".2"/>
              <path d="M900 1593.300L1422 1565.500 1946 1573.500 2468 1555.900 2990 1554" stroke="#a6eb85" stroke-width="4"/>
              <path d="M900 1532L1422 1536 1946 1509.500 2468 1509 2990 1496.700" stroke="#434348" stroke-width="4"/>
              <path d="M900 1443.400L1422 1403.500 1946 1381.800 2468 1323.700 2990 1197" stroke="#86b3e8" stroke-width="6"/>
            </g>
            <g fill="#86b3e8"><circle cx="900" cy="1443.400" r="8"/><circle cx="1422" cy="1403.500" r="8"/><circle cx="1946" cy="1381.800" r="8"/><circle cx="2990" cy="1197" r="8"/><circle cx="2468" cy="1323.700" r="20" opacity=".25"/><circle cx="2468" cy="1323.700" r="12" stroke="#fff" stroke-width="2"/></g>
            <g fill="#434348"><path d="M900 1524l8 8-8 8-8-8zM1422 1528l8 8-8 8-8-8zM1946 1501.500l8 8-8 8-8-8zM2990 1488.700l8 8-8 8-8-8z"/><circle cx="2468" cy="1508.500" r="20" opacity=".25"/><path d="M2468 1496.500l12 12-12 12-12-12z" stroke="#fff" stroke-width="2"/></g>
            <g fill="#a6eb85"><path d="M892 1585h16v16h-16zM1414 1557.500h16v16h-16zM1938 1565.500h16v16h-16zM2982 1546h16v16h-16z"/><circle cx="2468" cy="1555.500" r="20" opacity=".25"/><path d="M2456 1543h24v25h-24z" stroke="#fff" stroke-width="2"/></g>
            <g fill="#f7a35c" opacity=".2"><path d="M1946 1602.800l8 16h-16zM2990 1569.600l8 16h-16z"/><circle cx="2468" cy="1591.300" r="20" opacity=".25"/><path d="M2468 1579l12 24h-24z" stroke="#fff" stroke-width="2"/></g>
            <g class="tip">
              <rect x="2108" y="1176" width="330" height="176" rx="4" fill="#f8f8f8" fill-opacity=".85"/>
              <g fill="none" stroke="#000"><rect x="2110" y="1178" width="330" height="176" rx="4" stroke-opacity=".05" stroke-width="10"/><rect x="2110" y="1178" width="330" height="176" rx="4" stroke-opacity=".1" stroke-width="6"/><rect x="2110" y="1178" width="330" height="176" rx="4" stroke-opacity=".15" stroke-width="2"/></g>
              <rect x="2109" y="1177" width="328" height="174" rx="3" fill="#f9faf9" fill-opacity=".8"/>
              <rect x="2108" y="1176" width="330" height="176" rx="4" fill="none" stroke="#7cb5ec" stroke-width="2"/>
              <text class="sm" x="2122" y="1210.500" textLength="50">2021</text>
              <circle cx="2129" cy="1233.500" r="5" fill="#86b3e8"/><text x="2143" y="1240.500" textLength="161">Tidak kumuh:</text><text x="2312" y="1240.500" textLength="87" font-weight="700">69 658</text>
              <circle cx="2129" cy="1263.500" r="5" fill="#434348"/><text x="2143" y="1270.500" textLength="173">Kumuh ringan:</text><text x="2324" y="1270.500" textLength="86" font-weight="700">29 851</text>
              <circle cx="2129" cy="1293.500" r="5" fill="#a6eb85"/><text x="2143" y="1300.500" textLength="182">Kumuh sedang:</text><text x="2333" y="1300.500" textLength="86" font-weight="700">19 771</text>
              <circle cx="2129" cy="1323.500" r="5" fill="#eda15f"/><text x="2143" y="1330.500" textLength="158">Kumuh berat:</text><text x="2310" y="1330.500" textLength="87" font-weight="700">12 169</text>
            </g>
            <g class="legend">
              <path d="M1418 1793h32" stroke="#86b3e8" stroke-width="4"/><circle cx="1434" cy="1793" r="8" fill="#86b3e8"/><text x="1460" y="1801" textLength="163">Tidak kumuh</text>
              <path d="M1663 1793h32" stroke="#434348" stroke-width="4"/><path d="M1679 1785l8 8-8 8-8-8z" fill="#434348"/><text x="1705" y="1801" textLength="176">Kumuh ringan</text>
              <path d="M1921 1793h32" stroke="#a6eb85" stroke-width="4"/><path d="M1929 1785h16v16h-16z" fill="#a6eb85"/><text x="1963" y="1801" textLength="184">Kumuh sedang</text>
              <path d="M2188 1793h32" stroke="#f0a263" stroke-width="4"/><path d="M2204 1785l8 16h-16z" fill="#f0a263"/><text x="2229" y="1801" textLength="161">Kumuh berat</text>
            </g>
            <text class="credits" x="3114" y="1837" textLength="138">Highcharts.com</text>
          </svg>
        </div>
        <footer></footer>
      </section>
    </div>
  </div>
</main>

<div class="dock">
  <div class="app on"><svg viewBox="0 0 114 114"><clipPath id="ic"><rect x="14" y="14" width="86" height="86" rx="19"/></clipPath><g clip-path="url(#ic)"><path fill="url(#gBlue)" d="M14 14h86v86H14z"/><path fill="url(#gFace)" d="M62 14q-10 24-11 50h12q0 18 4 36h33V14z"/></g><path d="M37 39v6M77 39v6" stroke="#20242c" stroke-width="4" stroke-linecap="round"/><path d="M31 71q26 22 52 0" fill="none" stroke="#20242c" stroke-width="3" stroke-linecap="round"/></svg><i></i></div>
  <div class="app"><svg viewBox="0 0 114 114"><rect x="14" y="14" width="86" height="86" rx="19" fill="#b0b0b2"/><g><rect x="28" y="28" width="16" height="16" rx="4" fill="#80e060"/><rect x="49" y="28" width="16" height="16" rx="4" fill="#f6bd3c"/><rect x="70" y="28" width="16" height="16" rx="4" fill="#ec8c34"/><rect x="28" y="49" width="16" height="16" rx="4" fill="#da3528"/><rect x="49" y="49" width="16" height="16" rx="4" fill="#9ca4a8"/><rect x="70" y="49" width="16" height="16" rx="4" fill="#ee4a5c"/><rect x="28" y="70" width="16" height="16" rx="4" fill="#9a4ad4"/><rect x="49" y="70" width="16" height="16" rx="4" fill="#34a0f8"/><rect x="70" y="70" width="16" height="16" rx="4" fill="#5cccaa"/></g></svg></div>
  <div class="app"><svg viewBox="0 0 114 114"><rect x="14" y="14" width="86" height="86" rx="19" fill="#f8f8f6"/><path fill="#e55e53" d="M14 40v-7q0-19 19-19h48q19 0 19 19v7z"/><text x="57" y="34" font-size="17" font-weight="600" text-anchor="middle" fill="#fff" font-family="Inter">JUN</text><text x="57" y="86" font-size="52" font-weight="300" text-anchor="middle" fill="#2a2a2a" font-family="Inter">1</text></svg></div>
  <div class="app on"><svg viewBox="0 0 114 114"><rect x="14" y="14" width="86" height="86" rx="19" fill="#f2f0ec"/><path fill="url(#gYellow)" d="M14 36v-3q0-19 19-19h48q19 0 19 19v3z"/><path d="M14 37h86" stroke="#b3aa90" stroke-width="2"/><path d="M16 40h82" stroke="#bbb" stroke-width="2" stroke-dasharray="1 2"/><path d="M14 57h86M14 78h86" stroke="#d4d3da" stroke-width="1.600"/></svg><i></i></div>
  <div class="app"><svg viewBox="0 0 114 114"><rect x="14" y="14" width="86" height="86" rx="19" fill="url(#gBlue)"/><path d="M60 33L44 63M54 33l25 46M30 67h34M74 67h10M38 75l-3 6" stroke="#fff" stroke-width="7" stroke-linecap="round"/></svg></div>
  <div class="app"><svg viewBox="0 0 114 114"><rect x="14" y="14" width="86" height="86" rx="19" fill="url(#gGrey)"/><circle cx="57" cy="57" r="36" fill="#2c2d2e"/><circle cx="57" cy="57" r="34" fill="none" stroke="#a4a4a4" stroke-width="4" stroke-dasharray="2 1.500"/><circle cx="57" cy="57" r="27" fill="none" stroke="#8f9090" stroke-width="5"/><circle cx="57" cy="57" r="19" fill="#555" stroke="#222" stroke-width="4"/><path d="M57 57h28M57 57L43 33M57 57L43 81" stroke="#b0b0b0" stroke-width="4"/></svg><b>1</b></div>
  <div class="app on"><svg viewBox="0 0 114 114"><rect x="14" y="14" width="86" height="86" rx="19" fill="#f4f4f4"/><use href="#chromeball" x="20" y="20" width="74" height="74"/><path fill="#9c4a86" d="M38 14h24L14 61V36q0-22 24-22z"/><text x="0" y="0" transform="translate(27 43) rotate(-45)" font-size="14" font-weight="600" fill="#fff" font-family="Inter">DEV</text></svg><i></i></div>
  <div class="app on"><svg viewBox="0 0 114 114"><rect x="14" y="14" width="86" height="86" rx="19" fill="#f4f4f4"/><use href="#chromeball" x="20" y="20" width="74" height="74"/></svg><i></i></div>
  <div class="app on"><svg viewBox="0 0 114 114"><path fill="#2c6fae" d="M12 72l66-62 6 22-63 50q-4 2-8-3-3-4-1-7z"/><path fill="#3482cc" d="M12 42q-2-4 1-7 4-5 8-3l63 50-6 22z"/><path fill="#4aa3ee" d="M78 10l20 9q5 2 5 7v62q0 5-5 7l-20 9q-3 1-3-3V13q0-3 3-3z"/></svg><i></i></div>
  <div class="app on"><svg viewBox="0 0 114 114"><g fill="none" stroke-width="8" stroke-linecap="round" stroke-linejoin="round"><path d="M34 52Q21 60 22 75 24 101 57 101 92 101 93 75 93 58 78 48" stroke="url(#gNavi)"/><path d="M12 62Q14 18 45 12q12-2 14 27 0 6-8 7-10 1-18 7" stroke="#4480f4"/><path d="M102 62Q101 36 87 21q-7-7-12 1-5 10-6 17 0 3 10 10" stroke="#f0a83a"/></g></svg><i></i></div>
  <div class="app on"><svg viewBox="0 0 114 114"><rect x="14" y="14" width="86" height="86" rx="19" fill="url(#gWhite)"/><circle cx="57" cy="57" r="37" fill="#479fdd"/><path fill="#fff" d="M34 57l40-16q0 0-7 34-2 0-12-9l-4 6-2-11 16-14-22 12z"/></svg><b>154</b><i></i></div>
  <div class="app on"><svg viewBox="0 0 114 114"><rect x="14" y="14" width="86" height="86" rx="19" fill="url(#gGreen)"/><path fill="none" stroke="#fff" stroke-width="6" d="M29 86l4-16a29 29 0 1111 11z"/><path fill="#fff" d="M44 42q5-5 9 4 1 3-2 7 4 9 13 12 4-5 6-4l8 5q0 9-9 10-24-3-29-23-1-7 4-11z"/></svg><b>1</b><i></i></div>
  <div class="app on"><svg viewBox="0 0 114 114"><rect x="14" y="14" width="86" height="86" rx="19" fill="#ed7446"/><circle cx="77" cy="37" r="7.500" fill="#fff"/><path fill="#fff" d="M68 37l8 9-22 24-9-2zM48 68l-8 15h-9l2-4z"/><path d="M68 44L48 66M75 34l7-3" stroke="#ed7446" stroke-width="1.500"/></svg><i></i></div>
  <div class="app"><svg viewBox="0 0 114 114"><rect x="15.500" y="15.500" width="83" height="83" rx="18" fill="#000" stroke="#a9b4b8" stroke-width="3"/><rect x="23" y="24" width="67" height="66" rx="11" fill="#161d20"/><text x="28" y="43" font-size="17" font-weight="700" fill="#5fc74d" font-family="Liberation Mono">$</text><rect x="41" y="28" width="9" height="18" fill="#2d7a28"/></svg></div>
  <div class="app"><svg viewBox="0 0 114 114"><rect x="14" y="14" width="86" height="86" rx="19" fill="#fff"/><path fill="#55a0e4" d="M37 28h48v14H37z"/><path fill="#3a78cc" d="M37 42h48v14H37z"/><path fill="#2459b4" d="M37 56h48v14H37z"/><path fill="#1b418c" d="M37 70h48v14H37z"/><rect x="22" y="41" width="32" height="31" rx="3" fill="#1f52b0"/><text x="38" y="64" font-size="22" font-weight="700" text-anchor="middle" fill="#fff" font-family="Open Sans">W</text></svg></div>
  <div class="app on"><svg viewBox="0 0 114 114"><rect x="13" y="13" width="88" height="88" rx="20" fill="#fff"/><path fill="url(#gBrave)" d="M43 19h28l6 8 8-1 5 9-3 8q1 30-13 43L57 98 40 86Q26 73 27 43l-3-8 5-9 8 1z"/><path fill="#fff" d="M33 42l8-11 16 4 16-4 8 11-1 6-11 16 1 8-13-6-13 6 1-8-11-16zM47 76l10-7 10 7-10 8z"/><path fill="#ef4a26" d="M41 41l10 2-2 5 2 12 6 4 6-4 2-12-2-5 10-2-10 6v10l-6 5-6-5V47z"/></svg><i></i></div>
  <div class="app"><svg viewBox="0 0 114 114"><ellipse cx="57" cy="57" rx="44.500" ry="44.500" fill="none" stroke="#e93a52" stroke-width="4"/><ellipse cx="58" cy="57" rx="24" ry="38" fill="none" stroke="#e93a52" stroke-width="4"/><path d="M66 28q28 28 0 57" fill="none" stroke="#e93a52" stroke-width="3.500"/></svg></div>
  <div class="app"><svg viewBox="0 0 114 114"><rect x="14" y="14" width="86" height="86" rx="19" fill="url(#gWhite)"/><circle cx="57" cy="57" r="36" fill="url(#gBlue)"/><circle cx="57" cy="57" r="31" fill="none" stroke="#cfe4fa" stroke-width="5" stroke-dasharray="1 3"/><path fill="#e84a3c" d="M83 35L53 54l7 7z"/><path fill="#f2f2f2" d="M33 79l20-25 7 7z"/></svg></div>
  <div class="app"><svg viewBox="0 0 114 114"><path fill="#2f7cd0" d="M13 15q44-18 88 0v38q0 38-44 54Q13 91 13 53z"/><path fill="#fff" d="M18 20q39-16 78 0v33q0 32-39 48Q18 85 18 53z"/><path fill="url(#gShield)" d="M25 28q32-11 64 0v25q0 28-32 42Q25 81 25 53z"/><g fill="#fff"><path d="M35 43q0-9 8-9h5v9zM51 34h12v9H51zM66 34h5q9 0 9 9H66zM35 46h13v9H35zM66 46h14v9H66zM35 58h13v9h-5q-8 0-8-9zM51 58h12v9H51zM66 58h14q0 9-9 9h-5z"/></g><circle cx="16" cy="89" r="10" fill="#8c8c8c"/><path fill="#2a2a2a" d="M12 88h8v6h-8z"/><path d="M13.500 88v-3q2.500-4 5 0v3" fill="none" stroke="#2a2a2a" stroke-width="1.500"/></svg></div>
  <div class="app on"><svg viewBox="0 0 114 114"><path fill="#f4f7fd" stroke="#3d5684" stroke-width="3" d="M13 10h58q32 4 32 48 0 36-24 42H37Q11 98 11 66V12z"/><path fill="#b9cbec" d="M14 18q20 30 40 34 24-4 44 4-2 30-20 38l-38-2Q16 84 14 60z" opacity=".8"/><circle cx="57" cy="55" r="31" fill="none" stroke="#74747f" stroke-width="12" stroke-dasharray="14 7.640"/><circle cx="57" cy="55" r="22" fill="none" stroke="#74747f" stroke-width="19"/><circle cx="57" cy="55" r="22" fill="none" stroke="#d8d8dd" stroke-width="16"/><circle cx="57" cy="55" r="31" fill="none" stroke="#d8d8dd" stroke-width="9" stroke-dasharray="11 10.640" stroke-dashoffset="-1.500"/></svg><i></i></div>
  <hr class="s1">
  <div class="app on"><svg viewBox="0 0 114 114"><rect x="46" y="17" width="22" height="80" rx="4" fill="#060606"/><path d="M57 21v66" stroke="#1f3344" stroke-width="17" stroke-dasharray="4.500 3"/><path d="M48.500 90.500h17" stroke="#6db4ee" stroke-width="5"/></svg><i></i></div>
  <div class="app on"><svg viewBox="0 0 114 114"><path fill="#183f62" d="M8 4h50q10 2 16 14H20v58Q8 66 8 56z"/><path fill="#fff" d="M20 16h54q14 8 20 24l-20 60L46 92Q30 84 20 58z"/><path fill="#56c5e0" d="M37 33h56q12 14 12 24v48H54Q46 98 37 76z"/><path fill="#fff" d="M22 56h41V44l33 21-33 20V73H30z"/></svg><i></i></div>
  <div class="app"><svg viewBox="0 0 114 114"><rect x="14" y="14" width="86" height="86" rx="19" fill="#f2f2f2"/><rect x="21" y="21" width="72" height="72" rx="13" fill="url(#gSky)"/><path fill="#1f2f60" d="M21 60h72v16H21z"/><path fill="#a9b4c2" d="M21 72l14-4 16 8 14-4v21H34q-13 0-13-13z"/><path fill="#e8edf2" d="M22 80q14-8 24 4l10 9H34q-12-2-12-13z"/><path fill="#d4d7da" d="M62 72h30l10 28q-2 4-6 4H58q-5-1-5-5z"/><path fill="#6d7478" d="M68 76l14 5-4 10-10-4z"/><rect x="58" y="56" width="38" height="18" rx="5" fill="#141414"/></svg></div>
  <hr class="s2">
  <div class="app"><svg viewBox="0 0 114 114"><path fill="url(#gCan)" opacity=".95" d="M20 20h75l-8 76q-2 8-12 8H41q-10 0-12-8z"/><ellipse cx="57.500" cy="20" rx="37.500" ry="8" fill="#77797b"/><path fill="#e4e4e2" d="M28 20l8-11 12-2 8 5 12-5 20 9 2 8-14 6-14-4-12 6-18-4z"/><path fill="#9c9c9a" d="M38 20l8-8 6 14-10 2zM66 10l6 14 12-4z"/><path fill="#3f77c0" d="M70 14l6 4-4 6z"/><path fill="#c8652e" d="M56 22l6-2-2 8z"/></svg></div>
</div>
</body>
</html>
```
FILE: styles.css
```css
* { box-sizing: border-box; margin: 0; padding: 0; }
html, body { width: 3360px; height: 2100px; overflow: hidden; }
body { background: #000; display: flex; flex-direction: column; align-items: center; font-family: "Open Sans", sans-serif; border-bottom: 1px solid #4a4a4a; }
.defs { position: absolute; }
svg { display: block; flex: none; overflow: visible; }

/* macOS menu bar */
.menubar { width: 3360px; height: 50px; flex: none; display: flex; justify-content: space-between; align-items: center; color: #e6e6e6; font: 500 26px/46px Inter, sans-serif; white-space: nowrap; }
.menus { display: grid; grid-template-columns: 66px 143px 84px 88px 100px 128px 175px 133px 84px 136px 80px; padding: 0 0 4px 40px; align-items: center; letter-spacing: -.15px; }
.menus b { font-weight: 700; letter-spacing: 0; }
.menus .apple { width: 28px; height: 36px; margin-top: -4px; }
.status { display: grid; grid-template-columns: 75px 80px 74px 80px 71px 67px 73px 79px 68px 64px 62px 72px 251px; align-items: center; }
.status svg { width: 50px; height: 50px; }
.status time { letter-spacing: 0; padding: 0 0 4px 0; }

/* Browser window */
.window { isolation: isolate; width: 3360px; height: 1901px; flex: none; border-radius: 22px; overflow: hidden; background: #35363a; display: flex; flex-direction: column; }
.tabstrip { height: 84px; flex: none; background: #202124; border-top: 2px solid #6a6b6e; display: flex; align-items: flex-start; border-radius: 22px 22px 0 0; }
.lights { width: 187px; flex: none; display: flex; gap: 16px; padding: 29px 0 0 42px; }
.lights i { width: 24px; height: 24px; border-radius: 50%; background: #ed6a5e; }
.lights i:nth-child(2) { background: #f5bf4f; }
.lights i:nth-child(3) { background: #61c554; }
.tabs { display: flex; height: 82px; align-items: center; padding-top: 15px; }
.tab { width: 62px; height: 40px; display: flex; align-items: center; justify-content: center; border-right: 2px solid #55575b; padding-bottom: 2px; }
.tab.wide { width: 64px; }
.tab.plain { border-right-color: transparent; }
.tab svg { width: 32px; height: 32px; }
.tab.active { position: relative; height: 68px; background: #35363a; border: 0; border-radius: 18px 18px 0 0; align-self: flex-end; padding: 0; }
.tab.active::before, .tab.active::after { content: ""; position: absolute; bottom: 0; width: 16px; height: 16px; }
.tab.active::before { left: -16px; background: radial-gradient(circle at 0 0, transparent 15.500px, #35363a 16px); }
.tab.active::after { right: -16px; background: radial-gradient(circle at 100% 0, transparent 15.500px, #35363a 16px); }
.plus { width: 32px; height: 32px; margin: 33px 0 0 30px; }
.tabmenu { width: 32px; height: 32px; margin: 33px 0 0 123px; }

.toolbar { height: 72px; flex: none; display: flex; align-items: center; }
.navs { display: flex; gap: 32px; width: 216px; padding-left: 28px; flex: none; }
.navs svg { width: 32px; height: 32px; }
.urlbar { width: 2288px; height: 56px; border-radius: 28px; background: #202124; display: flex; align-items: center; padding: 0 20px 0 22px; color: #9a9c9f; font: 400 28px/56px Inter, sans-serif; letter-spacing: .25px; }
.urlbar > svg { width: 28px; height: 28px; margin-right: 18px; }
.urlbar b { color: #fff; font-weight: 400; }
.urlicons { display: flex; gap: 32px; margin-left: auto; }
.urlicons svg { width: 32px; height: 32px; }
.exts { display: flex; align-items: center; justify-content: space-between; width: 800px; margin-left: 28px; }
.exts svg, .wheel { width: 32px; height: 32px; flex: none; }
.exts .avatar { width: 44px; height: 44px; margin: 0 -6px; }
.wheel { border-radius: 50%; background: conic-gradient(#f4e23a, #ff7a2a, #f02a3a, #d02ad0, #4a3af0, #2a8af0, #2ad0a0, #4ad02a, #f4e23a); background: conic-gradient(from 0deg, #f03a6a, #d02ad0, #4a3af0, #2a8af0, #2ad0a0, #4ad02a, #f4e23a, #ff7a2a, #f03a6a); }

.bookmarks { height: 66px; flex: none; display: flex; align-items: center; padding: 0 22px 8px 28px; color: #f1f3f4; font: 400 24px/32px Inter, sans-serif; letter-spacing: -.15px; border-bottom: 2px solid #5c5d61; white-space: nowrap; }
.marks { display: grid; grid-template-columns: 162px 146px 176px 142px 308px 296px 300px 304px 265px 307px 280px; }
.bookmarks a { display: flex; gap: 16px; align-items: center; }
.bookmarks svg { width: 32px; height: 32px; }
.more { margin-left: auto; margin-right: 20px; font-size: 26px; }
.other { padding-left: 20px; border-left: 2px solid #63656a; height: 32px; }

/* Web page */
.page { flex: 1; display: flex; flex-direction: column; min-height: 0; background: #fafcf9; }
.navbar { position: relative; z-index: 2; height: 140px; flex: none; background: #4aa254; display: flex; align-items: center; color: #fff; box-shadow: 0 5px 56px rgba(58, 59, 69, .15); border-left: 2px solid #6fb278; }
.brand { width: 504px; display: flex; align-items: center; padding-left: 100px; }
.brand svg { width: 54px; height: 70px; margin-top: 1px; }
.brand strong { margin: -3px 0 0 32px; font-size: 32px; font-weight: 700; letter-spacing: 2.200px; }
.burger { width: 28px; height: 26px; margin-top: -2px; }
.user { margin-left: auto; height: 76px; border-left: 2px solid #d8ead9; padding-left: 56px; width: 242px; font-size: 25px; line-height: 74px; letter-spacing: .2px; white-space: nowrap; }
.body { flex: 1; display: flex; min-height: 0; }
.sidebar { position: relative; z-index: 3; width: 448px; flex: none; background: #fff; border-top: 2px solid #eef0f0; box-shadow: 0 5px 56px rgba(58, 59, 69, .15); clip-path: inset(0 -80px 0 0); }
.item { height: 82px; display: flex; align-items: center; padding-left: 33px; color: #858796; font-size: 25.500px; letter-spacing: .25px; }
.item svg { width: 32px; height: 32px; margin-right: 17px; }
.item .chev { width: 20px; height: 24px; margin: 0 38px 0 auto; }
.item.first { height: 117px; border-bottom: 2px solid #eaecf4; padding-bottom: 4px; }
h6 { height: 77px; padding: 14px 0 0 32px; font-size: 20.500px; line-height: 62px; font-weight: 700; letter-spacing: 4.600px; color: #b7b9cc; }
.content { flex: 1; display: flex; flex-direction: column; padding: 46px 49px 0 48px; background: #fafcf9; }
h1 { font-size: 53px; line-height: 68px; font-weight: 400; letter-spacing: .2px; color: #5a5c69; margin-bottom: 49px; }
.card { height: 1312px; flex: none; background: #fff; border-radius: 12px; box-shadow: 0 5px 56px rgba(58, 59, 69, .15); }
.filters { height: 231px; display: grid; grid-template-columns: repeat(3, 880px); gap: 48px; padding: 41px 40px 0; }
.filters label { font-size: 30px; line-height: 44px; letter-spacing: .35px; color: #757575; }
.select { display: flex; align-items: center; justify-content: space-between; height: 86px; margin-top: 19px; border: 2px solid #d1d3e2; border-radius: 11px; padding: 0 6px 1px 32px; color: #6e707e; }
.select svg { width: 18px; height: 11px; }
.chart { width: 2815px; height: 1081px; }
.ctitle { font-size: 30px; fill: #757575; }
.axis, .tip, .legend, .credits { font-family: "Noto Sans", sans-serif; }
.axis { font-size: 22px; fill: #666; }
.tip { font-size: 24px; fill: #333; }
.tip .sm { font-size: 20px; }
.legend { font-size: 24px; font-weight: 700; fill: #333; }
.credits { font-size: 18px; fill: #999; }
footer { flex: none; height: 16px; margin: 48px -49px 0 -48px; background: #fff; }

/* Dock */
.dock { position: relative; width: 2851px; height: 136px; flex: none; margin-top: 3px; padding: 4px 0 0 3px; background: #121212; border: 2px solid #3a3a3a; border-radius: 44px; display: flex; box-shadow: 0 0 60px rgba(0, 0, 0, .26); }
.app { position: relative; width: 114px; flex: none; display: flex; flex-direction: column; align-items: center; margin-right: -.08px; }
.app svg { width: 114px; height: 114px; }
.app i { width: 8px; height: 8px; border-radius: 50%; background: #8e8e8e; margin-top: 4px; }
.app b { position: absolute; left: 72px; top: 4px; min-width: 40px; height: 40px; padding: 0 4px; border-radius: 20px; background: #de4b3e; color: #fff; font: 400 24px/40px Inter, sans-serif; letter-spacing: -1px; text-align: center; }
.dock hr { border: 0; width: 2px; height: 100px; background: #444; margin: 12px 23px 0 28px; flex: none; }
.dock .s2 { margin: 12px 24px 0 26px; }
```
